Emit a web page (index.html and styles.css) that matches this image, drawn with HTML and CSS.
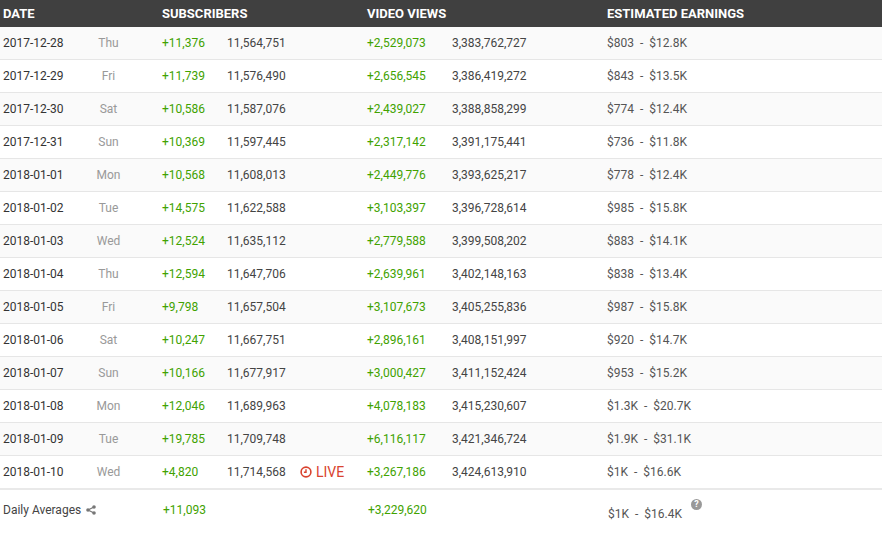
FILE: index.html
```html
<!DOCTYPE html>
<html>
<head>
<meta charset="utf-8">
<link rel="stylesheet" href="styles.css">
</head>
<body>
<div class="stats">
  <div class="row head">
    <span class="c-date">DATE</span>
    <span class="c-day"></span>
    <span class="c-sd">SUBSCRIBERS</span>
    <span class="c-st"></span>
    <span class="c-live"></span>
    <span class="c-vd">VIDEO VIEWS</span>
    <span class="c-vt"></span>
    <span class="c-earn">ESTIMATED EARNINGS</span>
  </div>

  <div class="row"><span class="c-date">2017-12-28</span><span class="c-day">Thu</span><span class="c-sd plus">+11,376</span><span class="c-st">11,564,751</span><span class="c-live"></span><span class="c-vd plus">+2,529,073</span><span class="c-vt">3,383,762,727</span><span class="c-earn"><span>$803</span><span class="dash">-</span><span>$12.8K</span></span></div>
  <div class="row"><span class="c-date">2017-12-29</span><span class="c-day">Fri</span><span class="c-sd plus">+11,739</span><span class="c-st">11,576,490</span><span class="c-live"></span><span class="c-vd plus">+2,656,545</span><span class="c-vt">3,386,419,272</span><span class="c-earn"><span>$843</span><span class="dash">-</span><span>$13.5K</span></span></div>
  <div class="row"><span class="c-date">2017-12-30</span><span class="c-day">Sat</span><span class="c-sd plus">+10,586</span><span class="c-st">11,587,076</span><span class="c-live"></span><span class="c-vd plus">+2,439,027</span><span class="c-vt">3,388,858,299</span><span class="c-earn"><span>$774</span><span class="dash">-</span><span>$12.4K</span></span></div>
  <div class="row"><span class="c-date">2017-12-31</span><span class="c-day">Sun</span><span class="c-sd plus">+10,369</span><span class="c-st">11,597,445</span><span class="c-live"></span><span class="c-vd plus">+2,317,142</span><span class="c-vt">3,391,175,441</span><span class="c-earn"><span>$736</span><span class="dash">-</span><span>$11.8K</span></span></div>
  <div class="row"><span class="c-date">2018-01-01</span><span class="c-day">Mon</span><span class="c-sd plus">+10,568</span><span class="c-st">11,608,013</span><span class="c-live"></span><span class="c-vd plus">+2,449,776</span><span class="c-vt">3,393,625,217</span><span class="c-earn"><span>$778</span><span class="dash">-</span><span>$12.4K</span></span></div>
  <div class="row"><span class="c-date">2018-01-02</span><span class="c-day">Tue</span><span class="c-sd plus">+14,575</span><span class="c-st">11,622,588</span><span class="c-live"></span><span class="c-vd plus">+3,103,397</span><span class="c-vt">3,396,728,614</span><span class="c-earn"><span>$985</span><span class="dash">-</span><span>$15.8K</span></span></div>
  <div class="row"><span class="c-date">2018-01-03</span><span class="c-day">Wed</span><span class="c-sd plus">+12,524</span><span class="c-st">11,635,112</span><span class="c-live"></span><span class="c-vd plus">+2,779,588</span><span class="c-vt">3,399,508,202</span><span class="c-earn"><span>$883</span><span class="dash">-</span><span>$14.1K</span></span></div>
  <div class="row"><span class="c-date">2018-01-04</span><span class="c-day">Thu</span><span class="c-sd plus">+12,594</span><span class="c-st">11,647,706</span><span class="c-live"></span><span class="c-vd plus">+2,639,961</span><span class="c-vt">3,402,148,163</span><span class="c-earn"><span>$838</span><span class="dash">-</span><span>$13.4K</span></span></div>
  <div class="row"><span class="c-date">2018-01-05</span><span class="c-day">Fri</span><span class="c-sd plus">+9,798</span><span class="c-st">11,657,504</span><span class="c-live"></span><span class="c-vd plus">+3,107,673</span><span class="c-vt">3,405,255,836</span><span class="c-earn"><span>$987</span><span class="dash">-</span><span>$15.8K</span></span></div>
  <div class="row"><span class="c-date">2018-01-06</span><span class="c-day">Sat</span><span class="c-sd plus">+10,247</span><span class="c-st">11,667,751</span><span class="c-live"></span><span class="c-vd plus">+2,896,161</span><span class="c-vt">3,408,151,997</span><span class="c-earn"><span>$920</span><span class="dash">-</span><span>$14.7K</span></span></div>
  <div class="row"><span class="c-date">2018-01-07</span><span class="c-day">Sun</span><span class="c-sd plus">+10,166</span><span class="c-st">11,677,917</span><span class="c-live"></span><span class="c-vd plus">+3,000,427</span><span class="c-vt">3,411,152,424</span><span class="c-earn"><span>$953</span><span class="dash">-</span><span>$15.2K</span></span></div>
  <div class="row"><span class="c-date">2018-01-08</span><span class="c-day">Mon</span><span class="c-sd plus">+12,046</span><span class="c-st">11,689,963</span><span class="c-live"></span><span class="c-vd plus">+4,078,183</span><span class="c-vt">3,415,230,607</span><span class="c-earn"><span>$1.3K</span><span class="dash">-</span><span>$20.7K</span></span></div>
  <div class="row"><span class="c-date">2018-01-09</span><span class="c-day">Tue</span><span class="c-sd plus">+19,785</span><span class="c-st">11,709,748</span><span class="c-live"></span><span class="c-vd plus">+6,116,117</span><span class="c-vt">3,421,346,724</span><span class="c-earn"><span>$1.9K</span><span class="dash">-</span><span>$31.1K</span></span></div>
  <div class="row last"><span class="c-date">2018-01-10</span><span class="c-day">Wed</span><span class="c-sd plus">+4,820</span><span class="c-st">11,714,568</span><span class="c-live live"><svg class="clock" viewBox="0 0 12 12" width="12" height="12"><circle cx="6" cy="6" r="4.9" fill="none" stroke="currentColor" stroke-width="1.6"/><path d="M6 3.2V6.3H3.9" fill="none" stroke="currentColor" stroke-width="1.4"/></svg>LIVE</span><span class="c-vd plus">+3,267,186</span><span class="c-vt">3,424,613,910</span><span class="c-earn"><span>$1K</span><span class="dash">-</span><span>$16.6K</span></span></div>

  <div class="row foot">
    <span class="c-date avg">Daily Averages <svg class="share" viewBox="0 0 10 10" width="10" height="10"><circle cx="8" cy="2" r="1.8" fill="currentColor"/><circle cx="2" cy="5" r="1.8" fill="currentColor"/><circle cx="8" cy="8" r="1.8" fill="currentColor"/><path d="M8 2L2 5L8 8" fill="none" stroke="currentColor" stroke-width="1.2"/></svg></span>
    <span class="c-day"></span>
    <span class="c-sd plus">+11,093</span>
    <span class="c-st"></span>
    <span class="c-live"></span>
    <span class="c-vd plus">+3,229,620</span>
    <span class="c-vt"></span>
    <span class="c-earn foot-earn"><span>$1K</span><span class="dash">-</span><span>$16.4K</span><span class="help">?</span></span>
  </div>
</div>
</body>
</html>
```

FILE: styles.css
```css
html, body {
  margin: 0;
  padding: 0;
  background: #ffffff;
}
body {
  font-family: Roboto, "Liberation Sans", Arial, sans-serif;
  font-size: 12px;
  color: #444;
  width: 882px;
}
.stats {
  display: flex;
  flex-direction: column;
}
.row {
  display: grid;
  grid-template-columns: 77px 82px 65px 73px 67px 85px 155px 1fr;
  align-items: center;
  padding-left: 3px;
  height: 32px;
  border-bottom: 1px solid #e6e6e6;
  background: #fafafa;
}
.row:nth-child(odd) {
  background: #ffffff;
}
.c-date { color: #333; }
.c-day {
  color: #999;
  text-align: center;
  padding-right: 25px;
}
.c-st, .c-vt { color: #444; }
.plus { color: #41a200; }
.c-earn { color: #555; display: flex; align-items: center; }
.row.head {
  background: #404040;
  font-weight: 700;
  font-size: 13px;
  height: 27px;
  border-bottom: none;
}
.row.head > span {
  color: #ffffff;
}
.row.last {
  border-bottom: 2px solid #e9e9e9;
  height: 32px;
}
.row.foot {
  background: #ffffff;
  border-bottom: none;
  height: 40px;
  align-items: center;
}
.dash { margin: 0 6px; }
.live {
  color: #d9432f;
  font-size: 14px;
  display: flex;
  align-items: center;
  gap: 4px;
}
.clock { display: block; flex-shrink: 0; }
.avg {
  color: #444;
  display: flex;
  align-items: center;
  gap: 5px;
  white-space: nowrap;
}
.share { color: #777; display: block; flex-shrink: 0; }
.foot .c-sd, .foot .c-vd { padding-left: 1px; }
.foot-earn {
  padding-left: 1px;
  padding-top: 8px;
}
.help {
  width: 11px;
  height: 11px;
  border-radius: 50%;
  background: #999;
  color: #fff;
  font-size: 9px;
  font-weight: 700;
  line-height: 11px;
  text-align: center;
  margin-left: 9px;
  align-self: flex-start;
  margin-top: -8px;
  flex-shrink: 0;
}
```
